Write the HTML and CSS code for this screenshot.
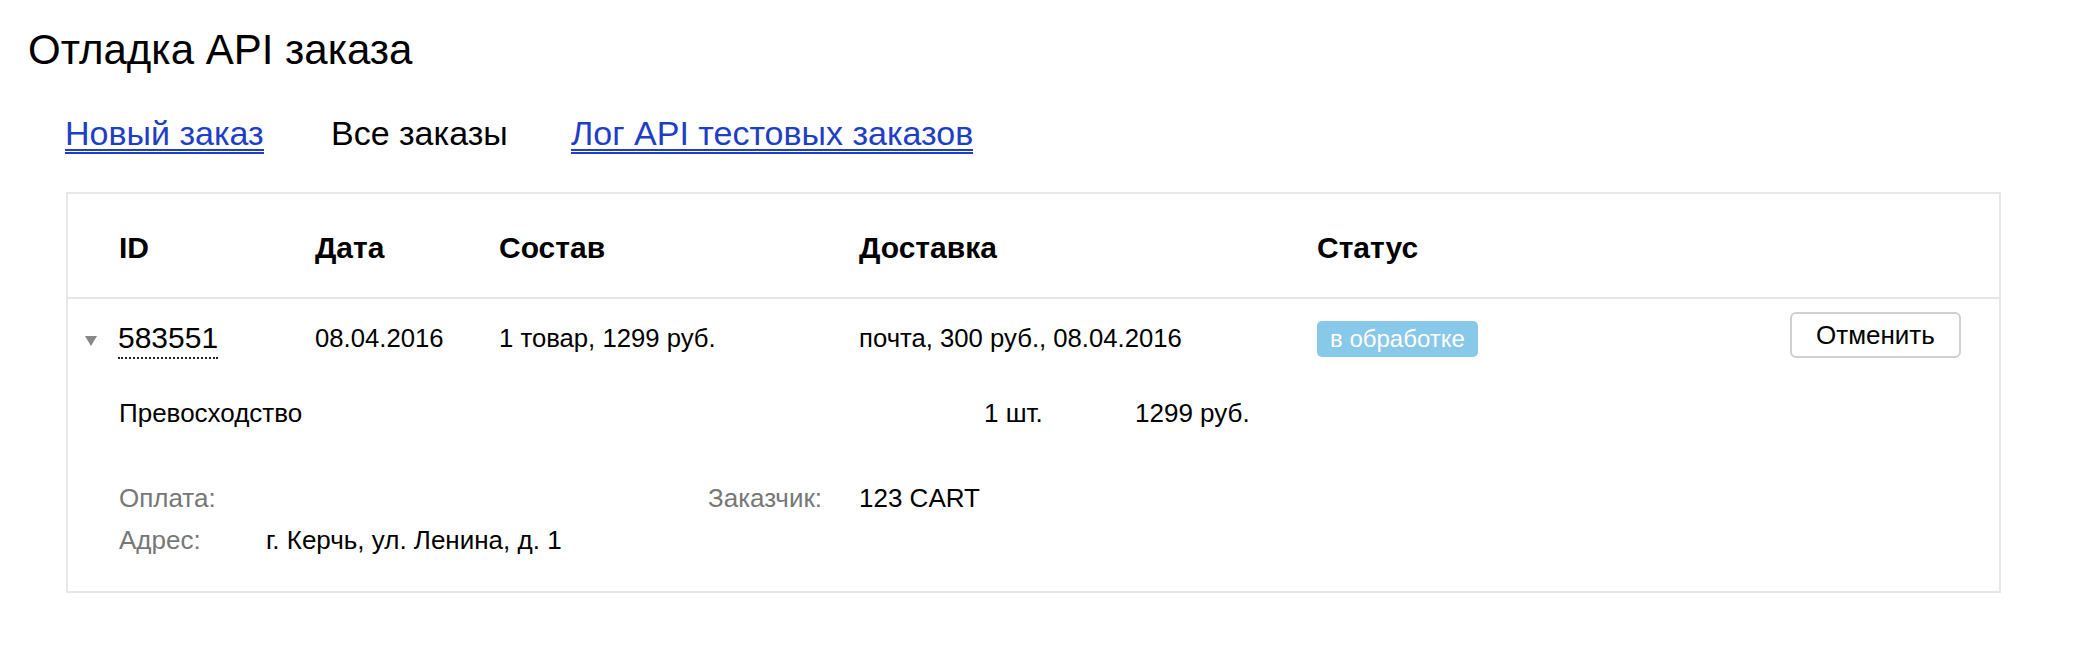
FILE: index.html
```html
<!DOCTYPE html>
<html lang="ru">
<head>
<meta charset="utf-8">
<title>Отладка API заказа</title>
<link rel="stylesheet" href="styles.css">
</head>
<body>
<div class="page">
  <h1 class="title">Отладка API заказа</h1>
  <nav class="tabs">
    <a class="tab-link" href="#">Новый заказ</a>
    <span class="tab-current">Все заказы</span>
    <a class="tab-link" href="#">Лог API тестовых заказов</a>
  </nav>
  <div class="orders">
    <div class="grid head">
      <div class="cell cell-id">ID</div>
      <div class="cell">Дата</div>
      <div class="cell">Состав</div>
      <div class="cell">Доставка</div>
      <div class="cell">Статус</div>
      <div class="cell"></div>
    </div>
    <div class="grid order-row">
      <div class="cell text id-cell"><span class="toggle"></span><a class="order-id" href="#">583551</a></div>
      <div class="cell text">08.04.2016</div>
      <div class="cell text">1 товар, 1299 руб.</div>
      <div class="cell text">почта, 300 руб., 08.04.2016</div>
      <div class="cell"><span class="badge">в обработке</span></div>
      <div class="cell"><button class="btn" type="button">Отменить</button></div>
    </div>
    <div class="items">
      <div>Превосходство</div>
      <div>1 шт.</div>
      <div>1299 руб.</div>
    </div>
    <div class="info">
      <div class="label">Оплата:</div>
      <div class="value"></div>
      <div class="label">Заказчик:</div>
      <div class="value">123 CART</div>
      <div class="label">Адрес:</div>
      <div class="value wide">г. Керчь, ул. Ленина, д. 1</div>
    </div>
  </div>
</div>
</body>
</html>
```
FILE: styles.css
```css
* { box-sizing: border-box; }

body {
  margin: 0;
  background: #fff;
  color: #000;
  font-family: "Liberation Sans", Arial, Helvetica, sans-serif;
}

.page {
  padding: 27px 0 0 28px;
}

.title {
  margin: 0;
  font-size: 42px;
  line-height: 46px;
  font-weight: normal;
}

.tabs {
  display: grid;
  grid-template-columns: 266px 240px auto;
  align-items: start;
  justify-items: start;
  margin: 45px 0 0 37px;
  font-size: 34px;
  line-height: 31px;
}

.tab-link {
  display: inline-block;
  color: #1f3ec6;
  text-decoration: none;
  border-bottom: 5px double #1f3ec6;
}

.tab-current {
  display: inline-block;
  color: #000;
}

.orders {
  width: 1935px;
  margin: 38px 0 0 38px;
  border: 2px solid #e8e8e8;
  padding-bottom: 36px;
}

.grid {
  display: grid;
  grid-template-columns: 228px 184px 360px 458px 473px auto;
  padding-left: 19px;
}

.head {
  padding-top: 36px;
  padding-bottom: 31px;
  border-bottom: 2px solid #e6e6e4;
  font-size: 30px;
  line-height: 36px;
  font-weight: bold;
}

.head .cell-id {
  padding-left: 32px;
}

.order-row {
  padding-top: 13px;
  align-items: start;
  font-size: 25.7px;
}

.text {
  margin-top: 11px;
  line-height: 30px;
}

.id-cell {
  display: flex;
  align-items: center;
}

.toggle {
  width: 0;
  height: 0;
  border-left: 6.5px solid transparent;
  border-right: 6.5px solid transparent;
  border-top: 10px solid #888;
  margin-left: -2px;
  margin-right: 21px;
  margin-top: -1px;
}

.order-id {
  display: inline-block;
  font-size: 30px;
  line-height: 30px;
  color: #000;
  text-decoration: none;
  padding-bottom: 4px;
  border-bottom: 2px dotted #222;
}

.badge {
  display: inline-block;
  margin-top: 9px;
  padding: 0 13px;
  background: #88c8e8;
  color: #fff;
  border-radius: 5px;
  font-size: 24px;
  line-height: 36px;
}

.btn {
  display: inline-block;
  height: 46px;
  padding: 0 24px;
  background: #fff;
  border: 2px solid #d0d0d0;
  border-radius: 6px;
  font-family: inherit;
  font-size: 26px;
  line-height: 42px;
  color: #000;
}

.items {
  display: grid;
  grid-template-columns: 865px 151px auto;
  padding-left: 51px;
  margin-top: 39px;
  font-size: 26px;
  line-height: 30px;
}

.info {
  display: grid;
  grid-template-columns: 147px 442px 151px auto;
  row-gap: 12px;
  padding-left: 51px;
  margin-top: 55px;
  font-size: 26px;
  line-height: 30px;
}

.label {
  color: #777;
}

.value {
  color: #000;
}

.wide {
  grid-column: 2 / 5;
}
```
